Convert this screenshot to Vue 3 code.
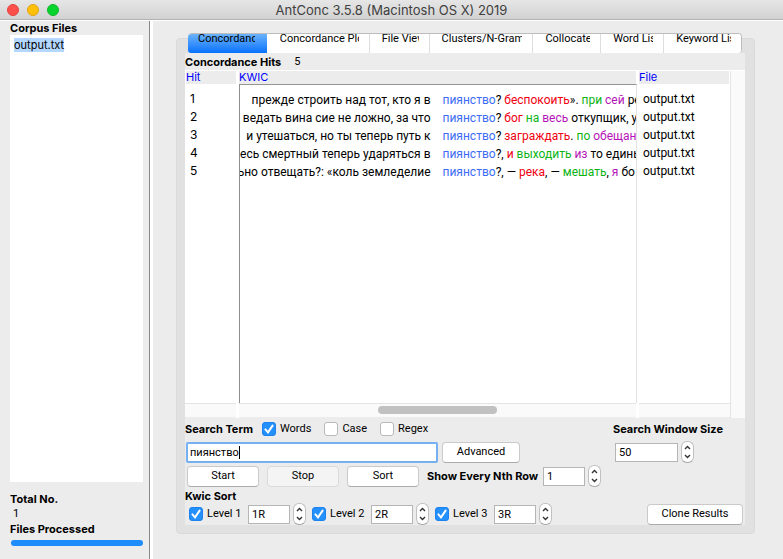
<script setup>
import { computed, ref } from 'vue'

const tabs = [
  { name: 'Concordance', size: 79 },
  { name: 'Concordance Plot', size: 102 },
  { name: 'File View', size: 60 },
  { name: 'Clusters/N-Grams', size: 104 },
  { name: 'Collocates', size: 68 },
  { name: 'Word List', size: 63 },
  { name: 'Keyword List', size: 78 },
]
const active = ref('Concordance')
const tabColumns = computed(() => tabs.map((t) => `minmax(0, ${t.size}fr)`).join(' '))

const hits = [
  { left: 'прежде строить над тот, кто я в', right: [['?', ''], [' беспокоить', 'r'], ['». ', ''], ['при', 'g'], [' сей', 'p'], [' ре', '']] },
  { left: 'ведать вина сие не ложно, за что', right: [['?', ''], [' бог', 'r'], [' на', 'g'], [' весь', 'p'], [' откупщик, ус', '']] },
  { left: 'и утешаться, но ты теперь путь к', right: [['?', ''], [' заграждать', 'r'], ['. ', ''], ['по', 'g'], [' обещани', 'p']] },
  { left: 'весь смертный теперь ударяться в', right: [['?, ', ''], ['и', 'r'], [' выходить', 'g'], [' из', 'p'], [' то едины', '']] },
  { left: 'льно отвещать?: «коль земледелие', right: [['?, — ', ''], ['река', 'r'], [', — ', ''], ['мешать', 'g'], [', ', ''], ['я', 'p'], [' бо', '']] },
]

const term = ref('пиянство')
const windowSize = ref('50')
const nth = ref('1')
const options = ref([
  { name: 'Words', on: true },
  { name: 'Case', on: false },
  { name: 'Regex', on: false },
])
const levels = ref([
  { name: 'Level 1', on: true, value: '1R' },
  { name: 'Level 2', on: true, value: '2R' },
  { name: 'Level 3', on: true, value: '3R' },
])
</script>

<template>
  <div class="window">
    <header class="titlebar">
      <div class="lights">
        <button class="light close" aria-label="Close"></button>
        <button class="light minimize" aria-label="Minimize"></button>
        <button class="light expand" aria-label="Zoom"></button>
      </div>
      <h1>AntConc 3.5.8 (Macintosh OS X) 2019</h1>
    </header>

    <div class="body">
      <aside class="sidebar">
        <h2 class="caption">Corpus Files</h2>
        <ul class="files">
          <li><span>output.txt</span></li>
        </ul>
        <div class="totals">
          <h2 class="caption">Total No.</h2>
          <p>1</p>
          <h2 class="caption">Files Processed</h2>
          <div class="progress"></div>
        </div>
      </aside>

      <main class="main">
        <section class="notebook">
          <nav class="tabs" :style="{ gridTemplateColumns: tabColumns }">
            <button
              v-for="t in tabs"
              :key="t.name"
              class="tab"
              :class="{ active: t.name === active }"
              @click="active = t.name"
            ><span>{{ t.name }}</span></button>
          </nav>

          <div class="page">
            <div class="hits-line"><h2 class="caption">Concordance Hits</h2><span>5</span></div>

            <div class="results">
              <table>
                <colgroup><col class="c-hit" /><col /><col class="c-file" /></colgroup>
                <thead>
                  <tr><th>Hit</th><th class="th-kwic">KWIC</th><th>File</th></tr>
                </thead>
                <tbody>
                  <tr v-for="(h, i) in hits" :key="i">
                    <td class="hit">{{ i + 1 }}</td>
                    <td class="kwic">
                      <div class="line">
                        <span class="before">{{ h.left }}</span>
                        <span class="after"><b>пиянство</b><span v-for="(p, j) in h.right" :key="j" :class="p[1]">{{ p[0] }}</span></span>
                      </div>
                    </td>
                    <td class="file">output.txt</td>
                  </tr>
                  <tr class="rest"><td></td><td class="kwic"></td><td></td></tr>
                </tbody>
              </table>
              <div class="vscroll"></div>
              <div class="hscrolls">
                <div class="track"></div>
                <div class="track wide"><div class="thumb"></div></div>
                <div class="track"></div>
              </div>
            </div>

            <form class="controls" @submit.prevent>
              <div class="row options">
                <label class="caption term" for="term">Search Term</label>
                <label v-for="o in options" :key="o.name" class="check">
                  <input v-model="o.on" type="checkbox" />
                  <svg viewBox="0 0 14 14"><path d="M3.4 7.4 6 10.3 10.6 3.6" /></svg>
                  <span>{{ o.name }}</span>
                </label>
                <label class="caption right size-label" for="size">Search Window Size</label>
              </div>

              <div class="row search">
                <div class="term-box">
                  <input id="term" v-model="term" class="field" type="text" />
                  <i class="caret"></i>
                </div>
                <button class="btn advanced">Advanced</button>
                <div class="spin right size">
                  <input id="size" v-model="windowSize" class="field" type="text" />
                  <div class="stepper">
                    <button aria-label="Increase"><svg viewBox="0 0 7 5"><path d="M1 4 3.5 1.5 6 4" /></svg></button>
                    <button aria-label="Decrease"><svg viewBox="0 0 7 5"><path d="M1 1 3.5 3.5 6 1" /></svg></button>
                  </div>
                </div>
              </div>

              <div class="row actions">
                <button class="btn">Start</button>
                <button class="btn" disabled>Stop</button>
                <button class="btn">Sort</button>
                <label class="caption nth" for="nth">Show Every Nth Row</label>
                <div class="spin">
                  <input id="nth" v-model="nth" class="field" type="text" />
                  <div class="stepper">
                    <button aria-label="Increase"><svg viewBox="0 0 7 5"><path d="M1 4 3.5 1.5 6 4" /></svg></button>
                    <button aria-label="Decrease"><svg viewBox="0 0 7 5"><path d="M1 1 3.5 3.5 6 1" /></svg></button>
                  </div>
                </div>
              </div>

              <h2 class="caption sort-title">Kwic Sort</h2>
              <div class="row levels">
                <div v-for="l in levels" :key="l.name" class="level">
                  <label class="check">
                    <input v-model="l.on" type="checkbox" />
                    <svg viewBox="0 0 14 14"><path d="M3.4 7.4 6 10.3 10.6 3.6" /></svg>
                    <span>{{ l.name }}</span>
                  </label>
                  <div class="spin">
                    <input v-model="l.value" class="field" type="text" :aria-label="l.name + ' position'" />
                    <div class="stepper">
                      <button aria-label="Increase"><svg viewBox="0 0 7 5"><path d="M1 4 3.5 1.5 6 4" /></svg></button>
                      <button aria-label="Decrease"><svg viewBox="0 0 7 5"><path d="M1 1 3.5 3.5 6 1" /></svg></button>
                    </div>
                  </div>
                </div>
                <button class="btn right clone">Clone Results</button>
              </div>
            </form>
          </div>
        </section>
      </main>
    </div>
  </div>
</template>

<style>
body {
  margin: 0;
  background: #ececec;
}
</style>

<style scoped>
* {
  box-sizing: border-box;
}
.window {
  display: flex;
  flex-direction: column;
  height: 100vh;
  font: 11px/14px Roboto, "Liberation Sans", sans-serif;
  color: #000;
  background: #ececec;
}
button,
input {
  font: inherit;
  color: inherit;
  margin: 0;
  padding: 0;
}
h1,
h2,
p,
ul {
  margin: 0;
  padding: 0;
  list-style: none;
}
.caption {
  font: 700 11px/14px Inter, "Liberation Sans", sans-serif;
  white-space: nowrap;
}

.titlebar {
  display: grid;
  grid-template-columns: 1fr auto 1fr;
  align-items: center;
  flex: none;
  height: 20px;
  background: linear-gradient(#e6e6e6, #d2d2d2);
  border-bottom: 1px solid #b2b2b2;
}
.titlebar h1 {
  font: 400 13px/18px Inter, "Liberation Sans", sans-serif;
  color: #404040;
}
.lights {
  display: flex;
  gap: 8px;
  padding-left: 7px;
}
.light {
  width: 12px;
  height: 12px;
  border: 1px solid;
  border-radius: 50%;
}
.close { background: #ff4f4a; border-color: #e2443f; }
.minimize { background: #ffc007; border-color: #e0a416; }
.expand { background: #04d42c; border-color: #12b62b; }

.body {
  display: flex;
  flex: 1;
  min-height: 0;
  border-top: 1px solid #fff;
}
.sidebar {
  display: flex;
  flex-direction: column;
  flex: none;
  width: 150px;
  padding: 0 6px 13px 10px;
  border-right: 1px solid #878787;
}
.files {
  flex: 1;
  padding: 3px 4px;
  background: #fff;
  font-family: Inter, "Liberation Sans", sans-serif;
}
.files span {
  display: inline-block;
  background: #b3d7ff;
}
.totals {
  padding-top: 10px;
}
.totals p {
  padding-left: 3px;
  line-height: 16px;
}
.progress {
  height: 6px;
  margin: 4px 0 0 1px;
  border-radius: 3px;
  background: #1e8cfa;
}

.main {
  display: flex;
  flex: 1;
  min-width: 0;
  padding: 17px 28px 25px 23px;
  border-left: 3px solid #fff;
}
.notebook {
  display: flex;
  flex-direction: column;
  flex: 1;
  min-width: 0;
  padding: 0 9px 8px 8px;
  background: #e1e1e1;
  border: 1px solid #dadada;
  border-radius: 4px;
}
.tabs {
  display: grid;
  flex: none;
  height: 20px;
  margin: -6px 3px 0;
  overflow: hidden;
  background: #fff;
  border-top: 1px solid #bdbdbd;
  border-right: 1px solid #bdbdbd;
  border-radius: 4px 4px 4px 3px;
}
.tab {
  display: flex;
  min-width: 0;
  padding: 0 10px 0 12px;
  border: 0;
  border-left: 1px solid #dedede;
  background: #fff;
}
.tab span {
  flex: 1;
  height: 12px;
  overflow: hidden;
  line-height: 10px;
  text-align: left;
  white-space: nowrap;
}
.tab.active {
  padding: 0 12px 0 10px;
  border: 0;
  background: linear-gradient(#6bb3fa, #0a72ff);
}
.tab.active + .tab {
  border-color: #fff;
}

.page {
  display: flex;
  flex-direction: column;
  flex: 1;
  min-height: 0;
  background: #ececec;
}
.hits-line {
  display: flex;
  align-items: center;
  gap: 13px;
  height: 17px;
}
.results {
  display: grid;
  grid-template-columns: 1fr 15px;
  grid-template-rows: 1fr 15px;
  flex: 1;
  min-height: 0;
  padding-top: 1px;
  background: #fff;
}
table {
  width: 100%;
  height: 100%;
  table-layout: fixed;
  border-collapse: separate;
  border-spacing: 0;
  border-left: 1px solid #fff;
}
.c-hit { width: 53px; }
.c-file { width: 93px; }
th {
  height: 13px;
  padding: 0;
  border-right: 3px solid #fff;
  background: #ececec;
  font: 400 11px/13px Inter, "Liberation Sans", sans-serif;
  text-align: left;
  color: #00f;
}
.th-kwic {
  border-right-width: 1px;
}
th:last-child {
  border-right-width: 1px;
  border-left: 2px solid #fff;
}
td {
  height: 18px;
  padding: 0;
  font-size: 12px;
  line-height: 18px;
}
tr:first-child td {
  height: 24px;
  padding-top: 5px;
}
tbody tr:first-child .kwic {
  border-top: 1px solid #959595;
}
.rest td {
  height: auto;
}
.hit {
  padding-left: 4px;
  font-family: Inter, "Liberation Sans", sans-serif;
}
.file { padding-left: 6px; }
.kwic {
  border-left: 1px solid #8e8e8e;
  border-right: 1px solid #e2e2e2;
}
.line {
  display: flex;
  height: 18px;
  overflow: hidden;
  line-height: 20px;
  white-space: nowrap;
}
.before {
  display: flex;
  flex: 190 1 0;
  min-width: 0;
  justify-content: flex-end;
  overflow: hidden;
}
.after {
  flex: 193 1 0;
  min-width: 0;
  padding-left: 12px;
  overflow: hidden;
  white-space: pre;
}
.after b { font-weight: 400; color: #3c6cf5; }
.r { color: #f00010; }
.g { color: #0cb414; }
.p { color: #b414b8; }

.vscroll {
  grid-row: 1 / 3;
  grid-column: 2;
  background: #fafafa;
  border-left: 1px solid #e4e4e4;
}
.hscrolls {
  display: grid;
  grid-template-columns: 51px 1fr 91px;
  gap: 3px;
}
.track {
  background: #fafafa;
  border-top: 1px solid #e4e4e4;
  border-bottom: 1px solid #ececec;
}
.wide { padding: 2px 35% 0; }
.thumb {
  height: 8px;
  border-radius: 4px;
  background: #c1c1c1;
}

.controls { flex: none; }
.row {
  display: flex;
  align-items: center;
}
.right { margin-left: auto; }
.options { height: 22px; }
.term { width: 77px; }
.check {
  display: flex;
  align-items: center;
  position: relative;
  gap: 4px;
}
.options .check { margin-right: 13px; }
.check input {
  appearance: none;
  flex: none;
  width: 14px;
  height: 14px;
  border: 1px solid #b9b9b9;
  border-radius: 3px;
  background: #fff;
}
.check input:checked {
  border-color: #1b82f0;
  background: #2490fb;
}
.check svg {
  position: absolute;
  left: 0;
  top: 0;
  width: 14px;
  height: 14px;
  fill: none;
  stroke: #fff;
  stroke-width: 2;
  stroke-linecap: round;
  pointer-events: none;
}
.size-label { width: 132px; }
.search { height: 24px; padding-left: 1px; }
.term-box {
  position: relative;
  flex: 0 1 252px;
}
.term-box .field {
  width: 100%;
  height: 21px;
  padding-left: 2px;
  border: 2px solid #75b0f0;
  border-radius: 2px;
  outline: none;
}
.caret {
  position: absolute;
  left: 53px;
  top: 4px;
  width: 1px;
  height: 13px;
  background: #000;
}
.field {
  width: 42px;
  height: 19px;
  padding: 0 3px;
  border: 1px solid #b5b5b5;
  background: #fff;
  outline: none;
}
.btn {
  width: 72px;
  height: 21px;
  border: 1px solid #cacaca;
  border-bottom-color: #ababab;
  border-radius: 4px;
  background: #fff;
  text-align: center;
  white-space: nowrap;
}
.btn:disabled {
  background: #f4f4f4;
  border-color: #dadada;
}
.advanced {
  width: 78px;
  margin-left: 4px;
}
.spin {
  display: flex;
  align-items: center;
  gap: 3px;
}
.size { width: 130px; }
.size .field { width: 63px; }
.stepper {
  display: flex;
  flex-direction: column;
  justify-content: center;
  width: 13px;
  height: 22px;
  border: 1px solid #c0c0c0;
  border-bottom-color: #a8a8a8;
  border-radius: 6px;
  background: #fff;
}
.stepper button {
  display: flex;
  align-items: center;
  justify-content: center;
  height: 9px;
  border: 0;
  background: none;
}
.stepper svg {
  width: 7px;
  height: 5px;
  fill: none;
  stroke: #333;
  stroke-width: 1.4;
}
.actions {
  height: 24px;
  padding-left: 2px;
}
.actions .btn { margin-right: 8px; }
.nth { width: 116px; }
.sort-title { padding-top: 1px; }
.levels {
  height: 22px;
  padding: 0 2px 0 4px;
}
.level {
  display: flex;
  align-items: center;
  margin-right: 6px;
}
.level .check { width: 59px; }
.clone { width: 96px; }
</style>
